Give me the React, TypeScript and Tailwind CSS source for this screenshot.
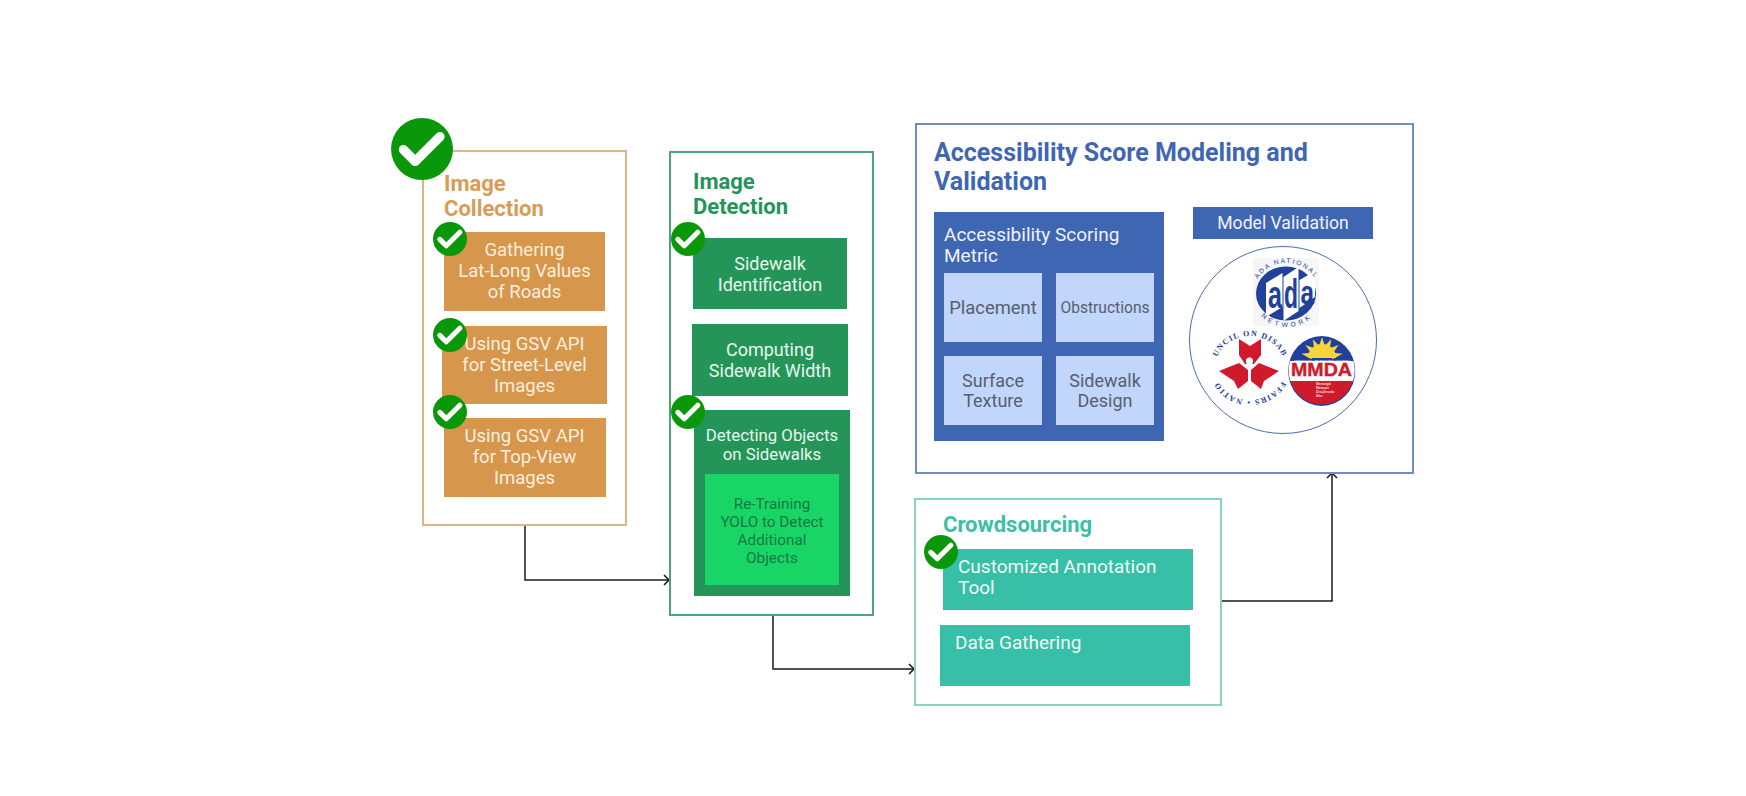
import React from 'react';

const CheckBadge = ({ className }: { className: string }) => (
  <svg viewBox="0 0 100 100" className={`absolute ${className}`}>
    <circle cx="50" cy="50" r="50" fill="#0a980a" />
    <path d="M20 51 L39 70 L79 30" fill="none" stroke="#ffffff" strokeWidth="15" strokeLinecap="round" strokeLinejoin="round" />
  </svg>
);

const AdaLogo = () => (
  <svg viewBox="0 0 70 76" className="absolute left-[61px] top-[11px] h-[76px] w-[70px]">
    <rect x="2" width="66" height="68" fill="#f6f6f6" />
    <defs>
      <path id="adaTop" d="M3 29 A34 34 0 0 1 68 29" />
      <path id="adaBottom" d="M10 58 A36 36 0 0 0 62 58" />
    </defs>
    <ellipse cx="35" cy="35.5" rx="30" ry="27" fill="#20409a" />
    <path d="M15 25 L31.5 15 L31.5 49 L15 59 Z" fill="#ffffff" />
    <path d="M32.5 19 L47.5 9 L47.5 53 L32.5 63 Z" fill="#ffffff" />
    <path d="M48.5 22 L64 13 L64 39 L48.5 50 Z" fill="#ffffff" />
    <g fontFamily="Liberation Sans" fontWeight="700" fill="#20409a">
      <text x="17" y="50" fontSize="38" textLength="14" lengthAdjust="spacingAndGlyphs">a</text>
      <text x="33" y="50" fontSize="40" textLength="14" lengthAdjust="spacingAndGlyphs">d</text>
      <text x="49.5" y="46" fontSize="34" textLength="13.5" lengthAdjust="spacingAndGlyphs">a</text>
    </g>
    <text fontFamily="Liberation Sans" fontSize="6.5" letterSpacing="1.8" fill="#20409a">
      <textPath href="#adaTop" startOffset="50%" textAnchor="middle">ADA NATIONAL</textPath>
    </text>
    <text fontFamily="Liberation Sans" fontSize="6.5" letterSpacing="3.5" fill="#20409a">
      <textPath href="#adaBottom" startOffset="50%" textAnchor="middle">NETWORK</textPath>
    </text>
  </svg>
);

const CouncilLogo = () => (
  <svg viewBox="0 0 90 90" className="absolute left-[16px] top-[79px] h-[90px] w-[90px]">
    <defs>
      <path id="ncdaTop" d="M9 42 A35 32 0 0 1 79 42" />
      <path id="ncdaBottom" d="M79 42 A35 32 0 0 1 9 42" />
    </defs>
    <text fontFamily="Liberation Serif" fontSize="8" fontWeight="700" letterSpacing="1.2" fill="#20409a">
      <textPath href="#ncdaTop" startOffset="50%" textAnchor="middle">UNCIL ON DISAB</textPath>
    </text>
    <text fontFamily="Liberation Serif" fontSize="8" fontWeight="700" letterSpacing="1.2" fill="#20409a">
      <textPath href="#ncdaBottom" startOffset="50%" textAnchor="middle">FFAIRS ▪ NATIO</textPath>
    </text>
    <path d="M33 13 L44 20 L55 13 L55 29 L48 38 L39 38 L33 29 Z" fill="#d01a2c" />
    <circle cx="43.5" cy="35" r="3.6" fill="#ffffff" />
    <path d="M13 45 L33 37 L42 44 L42 55 L32 63 L28 55 Z" fill="#d01a2c" />
    <path d="M73 45 L53 37 L45 44 L45 55 L55 63 L58 55 Z" fill="#d01a2c" />
  </svg>
);

const SUN_RAYS = [-78, -52, -26, 0, 26, 52, 78];

const MmdaLogo = () => (
  <svg viewBox="0 0 90 90" className="absolute left-[91px] top-[79px] h-[90px] w-[90px]">
    <defs>
      <clipPath id="mmdaClip">
        <ellipse cx="40.7" cy="44.5" rx="33" ry="34" />
      </clipPath>
    </defs>
    <ellipse cx="40.7" cy="45" rx="33.5" ry="35" fill="#20409a" />
    <g clipPath="url(#mmdaClip)">
      <rect x="0" y="35" width="90" height="20" fill="#ffffff" />
      <rect x="0" y="55" width="90" height="25" fill="#d01a2c" />
    </g>
    {SUN_RAYS.map((angle) => (
      <polygon key={angle} points="37.5,22 44.5,22 41,11" fill="#f5d53b" transform={`rotate(${angle} 41 32)`} />
    ))}
    <path d="M27 32 A14 14 0 0 1 55 32 Z" fill="#f5d53b" />
    <text x="41" y="34.5" textAnchor="middle" fontFamily="Liberation Sans" fontSize="2.3" fill="#ffffff" textLength="56" lengthAdjust="spacingAndGlyphs">METRO MANILA DEVELOPMENT AUTHORITY</text>
    <text x="40.5" y="50" textAnchor="middle" fontFamily="Liberation Sans" fontWeight="700" fontSize="18" fill="#d01a2c" stroke="#d01a2c" strokeWidth="0.4" textLength="61" lengthAdjust="spacingAndGlyphs">MMDA</text>
    <g fontFamily="Liberation Sans" fontSize="3.4" fontWeight="700" fill="#f8d5d5">
      <text x="35" y="59">Marangal</text>
      <text x="35" y="63">Matapat</text>
      <text x="35" y="67">Disiplinado</text>
      <text x="35" y="71">Ako.</text>
    </g>
  </svg>
);

export default function App() {
  return (
    <div className="relative h-[796px] w-[1746px] overflow-hidden bg-white font-['Roboto',sans-serif]">
      {/* arrows between the stages */}
      <svg viewBox="0 0 1746 796" className="absolute left-0 top-0 h-[796px] w-[1746px]" fill="none" stroke="#1a1a1a" strokeWidth="1.5">
        <path d="M525 525 V580 H669" />
        <path d="M664 575 L669 580 L664 585" />
        <path d="M773 615 V669 H914" />
        <path d="M909 664 L914 669 L909 674" />
        <path d="M1222 601 H1332 V473" />
        <path d="M1327 478 L1332 473 L1337 478" />
      </svg>

      {/* Image Collection */}
      <div className="absolute left-[422px] top-[150px] flex h-[376px] w-[205px] flex-col border-2 border-[#e0b383] bg-white">
        <h2 className="ml-[20px] mt-[19px] self-start text-[22px] font-bold leading-[25px] text-[#d89c55]">Image<br />Collection</h2>
        <div className="mt-[11px] flex flex-col items-center gap-[15px] text-center text-[18.5px] leading-[21px] text-[#fbeede]">
          <div className="relative flex h-[79px] w-[161px] items-center justify-center bg-[#d6974c]">
            <span>Gathering<br />Lat-Long Values<br />of Roads</span>
            <CheckBadge className="-left-[11px] -top-[10px] h-[34px] w-[34px]" />
          </div>
          <div className="relative flex h-[78px] w-[165px] items-center justify-center bg-[#d6974c]">
            <span>Using GSV API<br />for Street-Level<br />Images</span>
            <CheckBadge className="-left-[9px] -top-[8px] h-[34px] w-[34px]" />
          </div>
          <div className="relative -mt-px flex h-[79px] w-[162px] items-center justify-center bg-[#d6974c]">
            <span>Using GSV API<br />for Top-View<br />Images</span>
            <CheckBadge className="-left-[11px] -top-[23px] h-[34px] w-[34px]" />
          </div>
        </div>
      </div>
      <CheckBadge className="left-[391px] top-[118px] h-[62px] w-[62px]" />

      {/* Image Detection */}
      <div className="absolute left-[669px] top-[151px] flex h-[465px] w-[205px] flex-col border-2 border-[#4fa37c] bg-white">
        <h2 className="ml-[22px] mt-[16px] text-[22px] font-bold leading-[25px] text-[#23945a]">Image<br />Detection</h2>
        <div className="ml-[22px] mt-[19px] flex flex-col gap-[15px] text-center text-[18px] leading-[21px] text-[#e6f7ec]">
          <div className="relative flex h-[71px] w-[154px] items-center justify-center bg-[#249458]">
            <span>Sidewalk<br />Identification</span>
            <CheckBadge className="-left-[22px] -top-[16px] h-[34px] w-[34px]" />
          </div>
          <div className="-ml-px flex h-[72px] w-[156px] items-center justify-center bg-[#249458]">
            <span>Computing<br />Sidewalk Width</span>
          </div>
          <div className="relative ml-px -mt-px h-[186px] w-[156px] bg-[#249458] px-[11px] pt-[16px] text-[16.8px] leading-[19px]">
            <p className="h-[48px]">Detecting Objects<br />on Sidewalks</p>
            <div className="flex h-[111px] items-center justify-center bg-[#19d566] pt-[2px] text-[15.3px] leading-[18px] text-[#137a42]">
              <span>Re-Training<br />YOLO to Detect<br />Additional<br />Objects</span>
            </div>
            <CheckBadge className="-left-[23px] -top-[15px] h-[34px] w-[34px]" />
          </div>
        </div>
      </div>

      {/* Accessibility Score Modeling and Validation */}
      <div className="absolute left-[915px] top-[123px] h-[351px] w-[499px] border-2 border-[#6f8cc4] bg-white pl-[17px] pt-[13px]">
        <h2 className="text-[25px] font-bold leading-[29px] text-[#3f66b3]">Accessibility Score Modeling and<br />Validation</h2>
        <div className="mt-[11px] flex items-start gap-[25px]">
          <div className="mt-[5px] h-[229px] w-[230px] bg-[#3f66b3] px-[10px] pt-[12px]">
            <p className="text-[19px] leading-[21px] text-[#eef3fb]">Accessibility Scoring<br />Metric</p>
            <div className="mt-[7px] grid grid-cols-[98px_98px] grid-rows-[69px_69px] gap-[14px] text-center text-[18px] leading-[20px] text-[#55606f]">
              <div className="flex items-center justify-center bg-[#c2d5fb] text-[18.4px]">Placement</div>
              <div className="flex items-center justify-center bg-[#c2d5fb] text-[15.6px]">Obstructions</div>
              <div className="flex items-center justify-center bg-[#c2d5fb]"><span>Surface<br />Texture</span></div>
              <div className="flex items-center justify-center bg-[#c2d5fb]"><span>Sidewalk<br />Design</span></div>
            </div>
          </div>
          <div className="flex w-[188px] flex-col items-center gap-[7px]">
            <div className="flex h-[32px] w-[180px] items-center justify-center bg-[#3f66b3] text-[17.6px] text-[#eef3fb]">Model Validation</div>
            <div className="relative h-[188px] w-[188px] rounded-full border border-[#4a6cb0] bg-white">
              <AdaLogo />
              <CouncilLogo />
              <MmdaLogo />
            </div>
          </div>
        </div>
      </div>

      {/* Crowdsourcing */}
      <div className="absolute left-[914px] top-[498px] flex h-[208px] w-[308px] flex-col border-2 border-[#86d6c2] bg-white pl-[24px] pt-[12px] text-[19px] leading-[21px] text-[#f0fbf8]">
        <h2 className="ml-[3px] text-[22px] font-bold leading-[26px] text-[#3bbfa5]">Crowdsourcing</h2>
        <div className="relative ml-[3px] mt-[11px] h-[61px] w-[250px] bg-[#38bfa7] pl-[15px] pt-[7px]">
          Customized Annotation<br />Tool
          <CheckBadge className="-left-[19px] -top-[14px] h-[34px] w-[34px]" />
        </div>
        <div className="mt-[15px] h-[61px] w-[250px] bg-[#38bfa7] pl-[15px] pt-[7px]">Data Gathering</div>
      </div>
    </div>
  );
}
